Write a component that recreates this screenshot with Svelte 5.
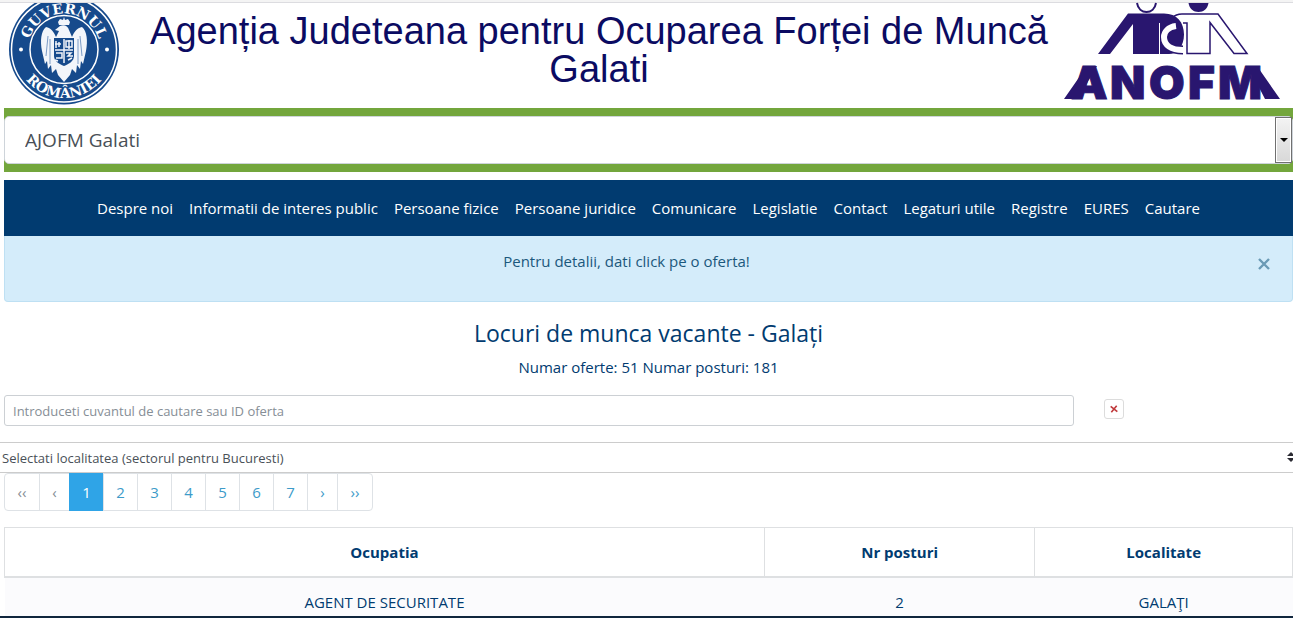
<script lang="ts">
  interface Job {
    name: string;
    count: number;
    city: string;
  }

  const menu = [
    'Despre noi',
    'Informatii de interes public',
    'Persoane fizice',
    'Persoane juridice',
    'Comunicare',
    'Legislatie',
    'Contact',
    'Legaturi utile',
    'Registre',
    'EURES',
    'Cautare'
  ];

  const pages = [1, 2, 3, 4, 5, 6, 7];

  const jobs: Job[] = [{ name: 'AGENT DE SECURITATE', count: 2, city: 'GALAŢI' }];

  let query = $state('');
  let current = $state(1);
  let showHint = $state(true);

  function goTo(page: number) {
    current = Math.min(Math.max(page, 1), pages.length);
  }
</script>

<div class="page">
  <header class="banner">
    <svg class="seal" viewBox="0 3 120 105" role="img" aria-label="Guvernul României">
      <defs>
        <path id="seal-top" d="M24 49.500a36 36 0 0 1 72 0" />
        <path id="seal-bottom" d="M11.500 49.500a48.500 48.500 0 0 0 97 0" />
        <clipPath id="seal-clip"><path d="M0 3h120v105H0z" /></clipPath>
      </defs>
      <g clip-path="url(#seal-clip)">
        <circle cx="60" cy="49.500" r="55" fill="#164a8c" />
        <circle cx="60" cy="49.500" r="52.500" fill="none" stroke="#fff" stroke-width="1.500" />
        <circle cx="60" cy="49.500" r="34" fill="none" stroke="#fff" stroke-width="1.500" />
      </g>
      <circle cx="17" cy="49.500" r="2" fill="#fff" />
      <circle cx="103" cy="49.500" r="2" fill="#fff" />
      <text class="seal-text" text-anchor="middle"><textPath href="#seal-top" startOffset="50%">GUVERNUL</textPath></text>
      <text class="seal-text" text-anchor="middle"><textPath href="#seal-bottom" startOffset="50%">ROMÂNIEI</textPath></text>
      <g fill="#f2f5fa">
        <path d="M54 22l2-3 3 1 1-3 1 3 3-1 2 3-1 3H55z" />
        <path d="M56 26c4-2 8 0 9 4l3 7c2-5 5-9 10-10 5 4 6 14 4 24l-3 13-2-3-1 8-3-4-1 8-4-4-2 6-6 7-6-7-2-6-4 4-1-8-3 4-1-8-2 3-3-13c-2-10-1-20 4-24 5 1 8 5 10 10l3-6-4-1z" />
      </g>
      <path d="M50 38h20v18c0 5-5 8-10 10-5-2-10-5-10-10z" fill="#164a8c" />
      <g fill="none" stroke="#f2f5fa" stroke-width="1.500">
        <path d="M52 41v7m3-6v5m-4-3h6M62 41h6v6h-6zm3-1v9M51 50h18M60 39v24M52 53h6v5h-6m10-5h5l-3 3h5m-5 4l4-2m-14 3l-3-1" />
      </g>
      <path d="M44 36l-2 20m4-17v25m30-28l2 20m-4-17v25" fill="none" stroke="#7b9bc6" />
    </svg>
    <h1 class="title">Agenția Judeteana pentru Ocuparea Forței de Muncă Galati</h1>
    <svg class="anofm" viewBox="1062 3 220 105" role="img" aria-label="ANOFM">
      <path d="M1137 3c1 6 5 9 9.500 9s8.500-3 9.500-9" fill="none" stroke="#29166f" stroke-width="2" />
      <path d="M1188.500 3h20c-1 6-5 9-10 9s-9-3-10-9z" fill="#29166f" />
      <path d="M1172 18c3-3 6-4 10-4h36l29 39.500h-13l-24-31v31h-23V23h-4" fill="#fff" stroke="#29166f" stroke-width="1.500" />
      <path d="M1128 13.500h36c13 0 20 9 20 21s-7 19.500-15 19.500h-36V24l-23 30h-12z" fill="#29166f" />
      <path d="M1176 26c-8 1-12 6-12 11 0 8 7 13 19 13" fill="none" stroke="#29166f" stroke-width="9" />
      <path d="M1176 26c-8 1-12 6-12 11 0 8 7 13 19 13" fill="none" stroke="#fff" stroke-width="6" />
      <path d="M1159.500 23v31" stroke="#fff" />
      <path d="M1064 99l23-33h10l-19 33zM1248 66h9l23 33h-15z" fill="#29166f" />
      <text class="logo-text" x="1071 1110 1149 1188 1218" y="99">ANOFM</text>
    </svg>
  </header>

  <div class="agency">
    <select class="agency-select" aria-label="Agentie">
      <option>AJOFM Galati</option>
    </select>
    <span class="agency-arrow" aria-hidden="true"></span>
  </div>

  <nav class="menu">
    {#each menu as item (item)}
      <a href="#top">{item}</a>
    {/each}
  </nav>

  {#if showHint}
    <div class="hint" role="alert">
      <p>Pentru detalii, dati click pe o oferta!</p>
      <button class="hint-close" aria-label="Inchide" onclick={() => (showHint = false)}>
        <svg viewBox="0 0 12 12"><path d="M1 1l10 10M11 1L1 11" /></svg>
      </button>
    </div>
  {/if}

  <main>
    <h2 class="heading">Locuri de munca vacante - Galați</h2>
    <p class="totals">Numar oferte: 51 Numar posturi: 181</p>

    <div class="search">
      <input
        type="text"
        aria-label="Cautare"
        placeholder="Introduceti cuvantul de cautare sau ID oferta"
        bind:value={query}
      />
      <button class="clear" aria-label="Sterge" onclick={() => (query = '')}>
        <svg viewBox="0 0 12 12"><path d="M1 2l10 8M10 1L2 11" /></svg>
      </button>
    </div>

    <div class="city">
      <select class="city-select" aria-label="Localitate">
        <option>Selectati localitatea (sectorul pentru Bucuresti)</option>
      </select>
      <svg class="city-arrow" viewBox="0 0 8 10" aria-hidden="true">
        <path d="M0 4l4-4 4 4zM0 6h8l-4 4z" />
      </svg>
    </div>

    <div class="pagination">
      <button class="edge muted" onclick={() => goTo(1)}>‹‹</button>
      <button class="step muted" onclick={() => goTo(current - 1)}>‹</button>
      {#each pages as page (page)}
        <button class:active={page === current} onclick={() => goTo(page)}>{page}</button>
      {/each}
      <button class="step" onclick={() => goTo(current + 1)}>›</button>
      <button class="edge" onclick={() => goTo(pages.length)}>››</button>
    </div>

    <table class="jobs">
      <thead>
        <tr>
          <th class="col-name">Ocupatia</th>
          <th class="col-count">Nr posturi</th>
          <th>Localitate</th>
        </tr>
      </thead>
      <tbody>
        {#each jobs as job (job.name)}
          <tr>
            <td>{job.name}</td>
            <td>{job.count}</td>
            <td>{job.city}</td>
          </tr>
        {/each}
      </tbody>
    </table>
  </main>
</div>

<style>
  :global(body) {
    background: #fff;
  }

  .page {
    overflow: hidden;
    border-top: 2px solid #f4f4f4;
    border-bottom: 2px solid #10263d;
    font-family: 'Open Sans', 'Noto Sans', sans-serif;
    font-size: 15px;
    line-height: 24px;
    color: #013b70;
  }

  select,
  input,
  button,
  th {
    box-sizing: border-box;
    margin: 0;
    font-family: inherit;
    border-radius: 0;
  }

  .banner {
    display: flex;
    justify-content: space-between;
    height: 105px;
    padding: 0 11px 0 4px;
    border-top: 1px solid #dcdce0;
  }

  .seal {
    flex: none;
    width: 120px;
    height: 105px;
    overflow: visible;
  }

  .seal-text {
    font-family: 'DejaVu Serif', serif;
    font-size: 14px;
    font-weight: 700;
    fill: #fff;
  }

  .title {
    flex: 1;
    margin: 0;
    padding: 9px 0 0 12px;
    font-family: 'Liberation Sans', Arial, sans-serif;
    font-size: 38px;
    font-weight: 400;
    line-height: 38px;
    text-align: center;
    color: #0b0b62;
  }

  .anofm {
    flex: none;
    width: 220px;
    height: 105px;
    overflow: visible;
  }

  .logo-text {
    font-family: Inter, sans-serif;
    font-size: 46px;
    font-weight: 900;
    fill: #29166f;
    stroke: #29166f;
    stroke-width: 1px;
  }

  .agency {
    position: relative;
    margin-left: 4px;
    padding: 8px 0;
    background: #73a63c;
  }

  .agency-select {
    display: block;
    width: 100%;
    height: 48px;
    padding: 0 20px;
    border: 1px solid #ced4da;
    border-radius: 5px;
    appearance: none;
    background: #fff;
    font-size: 19px;
    color: #495057;
  }

  .agency-arrow {
    position: absolute;
    top: 9px;
    right: 1px;
    display: grid;
    place-items: center;
    box-sizing: border-box;
    width: 17px;
    height: 46px;
    border: 1px solid #707070;
    background: linear-gradient(#f3f3f3, #d8d8d8);
    box-shadow: inset 0 0 0 1px #fff;
    pointer-events: none;
  }

  .agency-arrow::after {
    content: '';
    border: 4px solid transparent;
    border-top-color: #000;
    border-bottom: 0;
  }

  .menu {
    display: flex;
    justify-content: center;
    gap: 16px;
    margin: 8px 0 0 4px;
    padding: 16px 0;
    background: #013b70;
  }

  .menu a {
    color: #fff;
    text-decoration: none;
    white-space: nowrap;
  }

  .hint {
    position: relative;
    margin-left: 4px;
    padding: 13px 44px 28px 0;
    border: 1px solid #bee0f3;
    border-top: 0;
    border-radius: 0 0 4px 4px;
    background: #d4ecfa;
    text-align: center;
    color: #1b587c;
  }

  .hint p {
    margin: 0;
  }

  .hint-close {
    position: absolute;
    top: 12px;
    right: 12px;
    display: grid;
    place-items: center;
    width: 32px;
    height: 32px;
    padding: 0;
    border: 0;
    background: none;
  }

  .hint-close svg {
    width: 12px;
    height: 12px;
    stroke: #6a9ab5;
    stroke-width: 2.4;
  }

  .heading {
    margin: 15px 0 6px 4px;
    font-size: 23px;
    font-weight: 400;
    line-height: 32px;
    text-align: center;
  }

  .totals {
    margin: 0 0 0 4px;
    text-align: center;
  }

  .search {
    display: flex;
    align-items: center;
    gap: 30px;
    margin: 16px 0 16px 4px;
  }

  .search input {
    width: 83%;
    height: 31px;
    padding: 0 8px;
    border: 1px solid #ccd0d4;
    border-radius: 3px;
    font-size: 13px;
    color: #495057;
  }

  .search input::placeholder {
    color: #868e96;
    opacity: 1;
  }

  .clear {
    display: grid;
    place-items: center;
    width: 20px;
    height: 20px;
    margin-bottom: 4px;
    padding: 0;
    border: 1px solid #dcdcdc;
    border-radius: 3px;
    background: #fff;
  }

  .clear svg {
    width: 8px;
    height: 8px;
    stroke: #c0393b;
    stroke-width: 2.4;
  }

  .city {
    position: relative;
    overflow: hidden;
  }

  .city-select {
    display: block;
    width: 100%;
    height: 31px;
    padding: 0 2px;
    border: solid #ccc;
    border-width: 1px 0;
    appearance: none;
    background: #fff;
    font-size: 13px;
    color: #495057;
  }

  .city-arrow {
    position: absolute;
    top: 10px;
    right: -2px;
    width: 8px;
    height: 10px;
    fill: #2b2b33;
    pointer-events: none;
  }

  .pagination {
    display: flex;
    margin-left: 4px;
  }

  .pagination button {
    width: 35px;
    height: 38px;
    margin-right: -1px;
    padding: 0;
    border: 1px solid #dee2e6;
    background: #fff;
    font-size: 15px;
    color: #3d9bc9;
  }

  .pagination .edge {
    width: 36px;
  }

  .pagination .step {
    width: 31px;
  }

  .pagination .muted {
    color: #868e96;
  }

  .pagination .active {
    border-color: #2fa4e7;
    background: #2fa4e7;
    color: #fff;
  }

  .pagination button:first-child {
    border-radius: 4px 0 0 4px;
  }

  .pagination button:last-child {
    border-radius: 0 4px 4px 0;
  }

  .jobs {
    width: calc(100% - 4px);
    margin: 16px 0 0 4px;
    border-collapse: collapse;
    table-layout: fixed;
    text-align: center;
  }

  .jobs th {
    padding: 12px;
    border: 1px solid #dee0e2;
    border-bottom-width: 2px;
    font-weight: 700;
  }

  .jobs td {
    padding: 12px 12px 2px;
    background: #fbfbfd;
  }

  .col-name {
    width: 59%;
  }

  .col-count {
    width: 21%;
  }
</style>
